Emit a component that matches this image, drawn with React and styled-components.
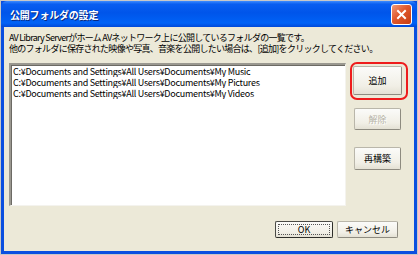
import styled, { createGlobalStyle } from "styled-components";

const GlobalStyle = createGlobalStyle`
  html, body {
    margin: 0;
    padding: 0;
    background: #d4d0c8;
  }
  body {
    font-family: "Noto Sans CJK JP", "Liberation Sans", sans-serif;
  }
`;

const Window = styled.div`
  width: 416px;
  height: 253px;
  border: 1px solid #c8c8c8;
  display: flex;
  flex-direction: column;
  background: #0a4fe0;
`;

const TitleBar = styled.div`
  height: 26px;
  display: flex;
  align-items: center;
  justify-content: space-between;
  padding: 0 5px 0 9px;
  background: linear-gradient(
    #3d8bff 0%,
    #0a5ef0 12%,
    #0055ea 45%,
    #0062f6 85%,
    #0048d8 100%
  );
  border-radius: 6px 6px 0 0;
`;

const Title = styled.span`
  color: #fff;
  font-size: 10px;
  font-weight: bold;
  letter-spacing: -0.2px;
  text-shadow: 1px 1px 0 #0a2a80;
`;

const CloseButton = styled.div`
  width: 19px;
  height: 19px;
  border: 1px solid #fff;
  border-radius: 3px;
  background: linear-gradient(135deg, #f09a7a 0%, #e0582c 45%, #c63d14 100%);
  display: flex;
  align-items: center;
  justify-content: center;
`;

const Body = styled.div`
  flex: 1;
  margin: 0 3px 3px 3px;
  background: #ece9d8;
  display: flex;
  flex-direction: column;
  padding: 5px 0 0 5px;
`;

const Description = styled.p`
  margin: 0;
  font-size: 9px;
  line-height: 11px;
  color: #000;
  letter-spacing: -0.72px;
  white-space: nowrap;
`;

const Main = styled.div`
  display: flex;
  align-items: flex-start;
  margin-top: 9px;
`;

const ListBox = styled.div`
  flex-shrink: 0;
  width: 332px;
  height: 139px;
  background: #fff;
  border-top: 2px solid #9a9890;
  border-left: 2px solid #9a9890;
  border-right: 1px solid #f4f3ee;
  border-bottom: 1px solid #f4f3ee;
  box-shadow: inset 1px 1px 0 #6c6a64;
  padding: 1px 0 0 2px;
  box-sizing: content-box;
`;

const ListItem = styled.div`
  font-size: 9px;
  line-height: 11px;
  height: 11px;
  overflow: hidden;
  color: #000;
  white-space: nowrap;
  letter-spacing: -0.28px;
`;

const SideColumn = styled.div`
  flex-shrink: 0;
  display: flex;
  flex-direction: column;
  align-items: flex-start;
  margin-left: 4px;
  margin-top: -1px;
`;

const Highlight = styled.div`
  border: 2px solid #ee1c1c;
  border-radius: 7px;
  padding: 2px 4px 3px 1px;
`;

const Button = styled.div`
  box-sizing: border-box;
  flex-shrink: 0;
  width: ${(p) => p.$w || 47}px;
  height: ${(p) => p.$h || 23}px;
  margin-top: ${(p) => p.$mt || 0}px;
  margin-left: ${(p) => p.$ml || 0}px;
  display: flex;
  align-items: center;
  justify-content: center;
  font-size: 9px;
  color: ${(p) => (p.$disabled ? "#b5b2a4" : "#000")};
  text-shadow: ${(p) => (p.$disabled ? "1px 1px 0 #fff" : "none")};
  background: linear-gradient(#fbfbf9, #f1efe6 70%, #e4e1d4);
  border: 1px solid ${(p) => (p.$default ? "#4a4a46" : "#b9b6aa")};
  border-right-color: ${(p) => (p.$default ? "#2e2e2a" : "#8e8b80")};
  border-bottom-color: ${(p) => (p.$default ? "#2e2e2a" : "#8e8b80")};
  border-radius: 2px;
`;

const Focus = styled.span`
  flex: 1;
  align-self: stretch;
  margin: 2px;
  border: 1px dotted #555;
  display: flex;
  align-items: center;
  justify-content: center;
`;

const Footer = styled.div`
  display: flex;
  justify-content: flex-end;
  gap: 4px;
  margin-top: 15px;
  padding-right: 16px;
`;

const folders = [
  "C:¥Documents and Settings¥All Users¥Documents¥My Music",
  "C:¥Documents and Settings¥All Users¥Documents¥My Pictures",
  "C:¥Documents and Settings¥All Users¥Documents¥My Videos",
];

export default function App() {
  return (
    <>
      <GlobalStyle />
      <Window>
        <TitleBar>
          <Title>公開フォルダの設定</Title>
          <CloseButton>
            <svg width="11" height="11" viewBox="0 0 11 11">
              <path
                d="M2 2 L9 9 M9 2 L2 9"
                stroke="#fff"
                strokeWidth="2"
                strokeLinecap="square"
              />
            </svg>
          </CloseButton>
        </TitleBar>
        <Body>
          <Description>
            AV Library Serverがホーム AVネットワーク上に公開しているフォルダの一覧です。
            <br />
            他のフォルダに保存された映像や写真、音楽を公開したい場合は、[追加]をクリックしてください。
          </Description>
          <Main>
            <ListBox>
              {folders.map((f) => (
                <ListItem key={f}>{f}</ListItem>
              ))}
            </ListBox>
            <SideColumn>
              <Highlight>
                <Button $w={49} $h={29}>
                  追加
                </Button>
              </Highlight>
              <Button $disabled $mt={8} $ml={4} $h={22}>
                解除
              </Button>
              <Button $mt={17} $ml={4}>
                再構築
              </Button>
            </SideColumn>
          </Main>
          <Footer>
            <Button $default $w={58} $h={17}>
              <Focus>OK</Focus>
            </Button>
            <Button $w={61} $h={17}>
              キャンセル
            </Button>
          </Footer>
        </Body>
      </Window>
    </>
  );
}
